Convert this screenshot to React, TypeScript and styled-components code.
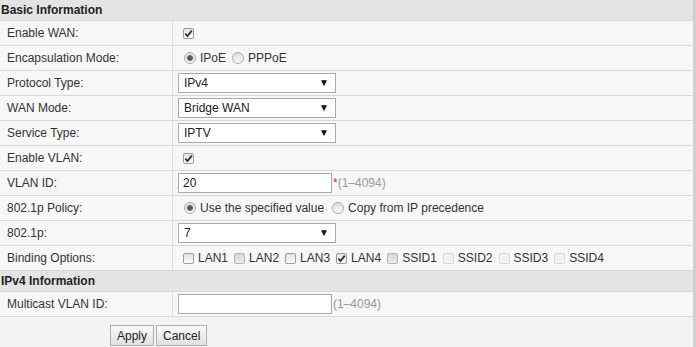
import React from 'react'
import styled, { createGlobalStyle } from 'styled-components'

const GlobalStyle = createGlobalStyle`
  html, body {
    margin: 0;
    padding: 0;
    background: #f7f7f7;
  }
  body {
    font-family: 'Liberation Sans', Arial, sans-serif;
    font-size: 12px;
    color: #333;
  }
`

const Page = styled.div`
  width: 693px;
  height: 347px;
  overflow: hidden;
  border-right: 3px solid #d0d0d0;
  background: #f7f7f7;
`

const SectionHeader = styled.div<{ $first?: boolean }>`
  height: 20px;
  display: flex;
  align-items: center;
  padding-left: 1px;
  background: #e4e4e4;
  border-top: ${p => (p.$first ? 'none' : '1px solid #d6d6d6')};
  font-weight: bold;
  color: #222;
`

const Row = styled.div`
  display: grid;
  grid-template-columns: 173px 1fr;
  height: 24px;
  border-top: 1px solid #d9d9d9;
`

const Label = styled.div`
  display: flex;
  align-items: center;
  padding-left: 7px;
  border-right: 1px solid #dcdcdc;
`

const Value = styled.div<{ $indent?: number }>`
  display: flex;
  align-items: center;
  padding-left: ${p => p.$indent ?? 10}px;
  white-space: nowrap;
`

const SelectBox = styled.div`
  position: relative;
  width: 151px;
  height: 18px;
  display: flex;
  align-items: center;
  padding-left: 5px;
  background: #fff;
  border: 1px solid #aaa;
  color: #222;
`

const Arrow = styled.span`
  position: absolute;
  right: 6px;
  top: 3px;
  font-size: 10px;
  color: #111;
`

const TextInput = styled.div`
  width: 148px;
  height: 18px;
  display: flex;
  align-items: center;
  padding-left: 4px;
  background: #fff;
  border: 1px solid #aaa;
  color: #222;
`

const Hint = styled.span`
  margin-left: 1px;
  color: #999;
`

const Star = styled.span`
  color: #e03030;
`

const Box = styled.span<{ $tone?: 'normal' | 'grey' | 'faint' }>`
  display: inline-flex;
  align-items: center;
  justify-content: center;
  width: 11px;
  height: 11px;
  box-sizing: border-box;
  border-radius: 2px;
  border: 1px solid ${p => (p.$tone === 'faint' ? '#d8d8d8' : p.$tone === 'grey' ? '#b4b4b4' : '#9c9c9c')};
  background: ${p =>
    p.$tone === 'faint'
      ? '#f2f2f2'
      : p.$tone === 'grey'
      ? 'linear-gradient(#d6d6d6, #ececec)'
      : 'linear-gradient(#e2e2e2, #fbfbfb)'};
`

const RadioDot = styled.span<{ $checked?: boolean }>`
  position: relative;
  display: inline-block;
  width: 12px;
  height: 12px;
  box-sizing: border-box;
  border-radius: 50%;
  border: 1px solid #ababab;
  background: linear-gradient(#dedede, #fafafa);

  &::after {
    content: '';
    display: ${p => (p.$checked ? 'block' : 'none')};
    position: absolute;
    left: 2px;
    top: 2px;
    width: 6px;
    height: 6px;
    border-radius: 50%;
    background: radial-gradient(circle, #555 30%, #8a8a8a 100%);
  }
`

const Option = styled.span<{ $gap?: number }>`
  display: inline-flex;
  align-items: center;
  gap: 4px;
  margin-right: ${p => p.$gap ?? 6}px;
`

const ButtonBar = styled.div`
  display: flex;
  gap: 2px;
  padding: 8px 0 0 110px;
  height: 40px;
  border-top: 1px solid #d9d9d9;
  background: #f3f3f3;
`

const Button = styled.button`
  height: 21px;
  padding: 0 6px;
  font-family: 'Liberation Sans', Arial, sans-serif;
  font-size: 12px;
  color: #222;
  border: 1px solid #b0b0b0;
  border-radius: 0;
  background: linear-gradient(#fbfbfb, #e0e0e0);
`

const Check = () => (
  <svg width="9" height="9" viewBox="0 0 9 9">
    <path d="M1.3 4.6 L3.5 7 L7.8 1.6" fill="none" stroke="#333" strokeWidth="1.8" />
  </svg>
)

const CheckBox = ({ checked, tone }: { checked?: boolean; tone?: 'normal' | 'grey' | 'faint' }) => (
  <Box $tone={tone}>{checked && <Check />}</Box>
)

const Select = ({ value }: { value: string }) => (
  <SelectBox>
    {value}
    <Arrow>▼</Arrow>
  </SelectBox>
)

const bindings: { name: string; checked?: boolean; tone?: 'normal' | 'grey' | 'faint' }[] = [
  { name: 'LAN1' },
  { name: 'LAN2', tone: 'grey' },
  { name: 'LAN3' },
  { name: 'LAN4', checked: true },
  { name: 'SSID1', tone: 'grey' },
  { name: 'SSID2', tone: 'faint' },
  { name: 'SSID3', tone: 'faint' },
  { name: 'SSID4', tone: 'faint' },
]

export default function App() {
  return (
    <Page>
      <GlobalStyle />
      <SectionHeader $first>Basic Information</SectionHeader>
      <Row>
        <Label>Enable WAN:</Label>
        <Value $indent={10}>
          <CheckBox checked />
        </Value>
      </Row>
      <Row>
        <Label>Encapsulation Mode:</Label>
        <Value $indent={11}>
          <Option>
            <RadioDot $checked />
            IPoE
          </Option>
          <Option>
            <RadioDot />
            PPPoE
          </Option>
        </Value>
      </Row>
      <Row>
        <Label>Protocol Type:</Label>
        <Value $indent={5}>
          <Select value="IPv4" />
        </Value>
      </Row>
      <Row>
        <Label>WAN Mode:</Label>
        <Value $indent={5}>
          <Select value="Bridge WAN" />
        </Value>
      </Row>
      <Row>
        <Label>Service Type:</Label>
        <Value $indent={5}>
          <Select value="IPTV" />
        </Value>
      </Row>
      <Row>
        <Label>Enable VLAN:</Label>
        <Value $indent={10}>
          <CheckBox checked />
        </Value>
      </Row>
      <Row>
        <Label>VLAN ID:</Label>
        <Value $indent={5}>
          <TextInput>20</TextInput>
          <Hint>
            <Star>*</Star>(1–4094)
          </Hint>
        </Value>
      </Row>
      <Row>
        <Label>802.1p Policy:</Label>
        <Value $indent={11}>
          <Option $gap={8}>
            <RadioDot $checked />
            Use the specified value
          </Option>
          <Option>
            <RadioDot />
            Copy from IP precedence
          </Option>
        </Value>
      </Row>
      <Row>
        <Label>802.1p:</Label>
        <Value $indent={5}>
          <Select value="7" />
        </Value>
      </Row>
      <Row>
        <Label>Binding Options:</Label>
        <Value $indent={10}>
          {bindings.map(b => (
            <Option key={b.name} $gap={6}>
              <CheckBox checked={b.checked} tone={b.tone} />
              {b.name}
            </Option>
          ))}
        </Value>
      </Row>
      <SectionHeader>IPv4 Information</SectionHeader>
      <Row>
        <Label>Multicast VLAN ID:</Label>
        <Value $indent={5}>
          <TextInput />
          <Hint>(1–4094)</Hint>
        </Value>
      </Row>
      <ButtonBar>
        <Button>Apply</Button>
        <Button>Cancel</Button>
      </ButtonBar>
    </Page>
  )
}
